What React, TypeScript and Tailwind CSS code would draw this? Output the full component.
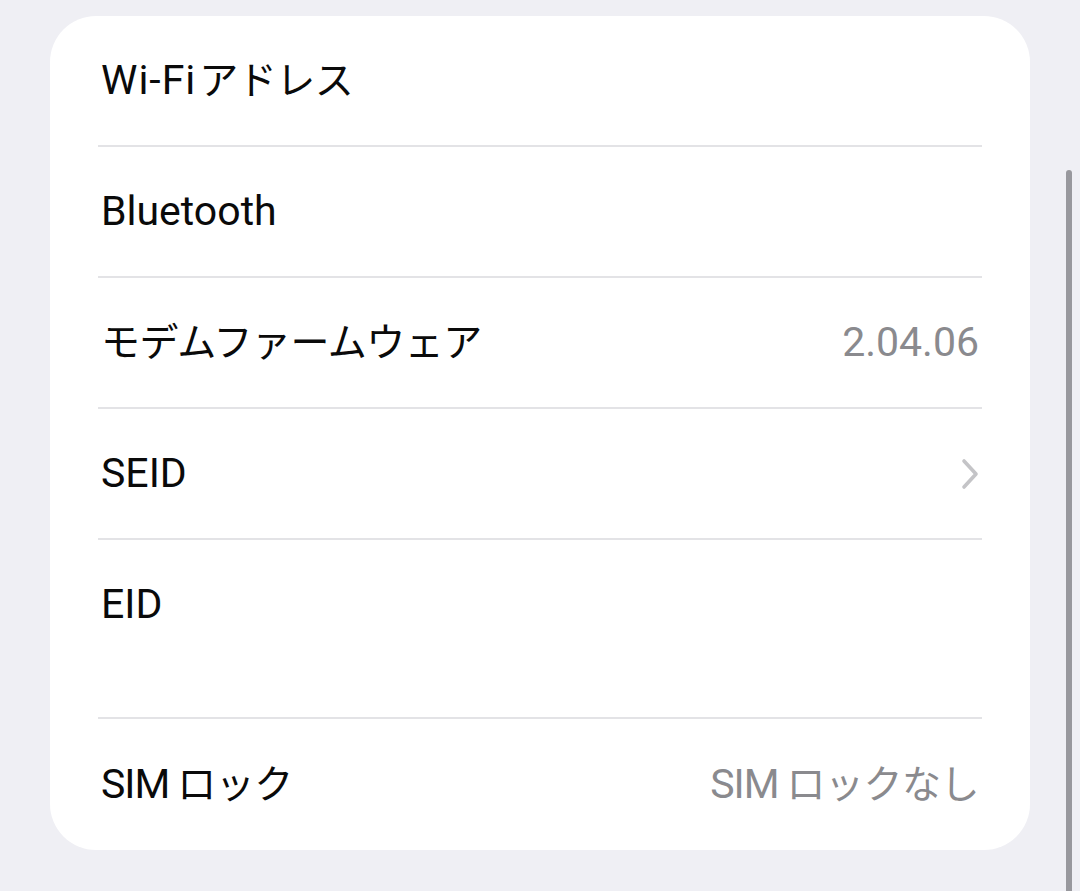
import React from "react";

const font = {
  fontFamily: 'Roboto, "Noto Sans CJK JP", sans-serif',
};

function Jp({ children }: { children: React.ReactNode }) {
  return <span className="text-[39px] tracking-[-0.5px]">{children}</span>;
}

function Divider() {
  return <div className="mx-[48px] h-[2px] bg-[#e3e3e6]" />;
}

function Row({
  label,
  value,
  chevron,
  extra,
}: {
  label: React.ReactNode;
  value?: React.ReactNode;
  chevron?: boolean;
  extra?: boolean;
}) {
  return (
    <div className={extra ? "h-[177px]" : ""}>
      <div className="flex h-[129px] items-center justify-between pl-[51px] pr-[51px]">
        <div className="text-[41px] leading-none text-[#0a0a0a]">{label}</div>
        {value && <div className="text-[41px] leading-none text-[#8a8a8e]">{value}</div>}
        {chevron && (
          <svg width="20" height="32" viewBox="0 0 20 32" className="mr-[-1px]">
            <path
              d="M4 3 L16 16 L4 29"
              fill="none"
              stroke="#c4c4c7"
              strokeWidth="3.6"
              strokeLinecap="round"
              strokeLinejoin="round"
            />
          </svg>
        )}
      </div>
    </div>
  );
}

export default function App() {
  return (
    <div className="relative h-[891px] w-[1080px] overflow-hidden bg-[#efeff4] pt-[16px]" style={font}>
      <div className="ml-[50px] w-[980px] overflow-hidden rounded-[46px] bg-white">
        <Row
          label={
            <>
              <span className="tracking-[1px]">Wi-Fi</span>
              <span className="ml-[3px]" />
              <Jp>アドレス</Jp>
            </>
          }
        />
        <Divider />
        <Row label="Bluetooth" />
        <Divider />
        <Row label={<Jp>モデムファームウェア</Jp>} value="2.04.06" />
        <Divider />
        <Row label="SEID" chevron />
        <Divider />
        <Row label="EID" extra />
        <Divider />
        <div className="h-[131px]">
          <div className="flex h-[131px] items-center justify-between pl-[51px] pr-[51px]">
            <div className="text-[41px] leading-none text-[#0a0a0a]">
              <span className="tracking-[-1px]">SIM</span>
              <span className="ml-[8px]" />
              <Jp>ロック</Jp>
            </div>
            <div className="text-[41px] leading-none text-[#8a8a8e]">
              <span className="tracking-[-1px]">SIM</span>
              <span className="ml-[8px]" />
              <Jp>ロックなし</Jp>
            </div>
          </div>
        </div>
      </div>
      {/* scroll indicator */}
      <div className="absolute left-[1066px] top-[170px] h-[760px] w-[6px] rounded-full bg-[#98989d]" />
    </div>
  );
}
